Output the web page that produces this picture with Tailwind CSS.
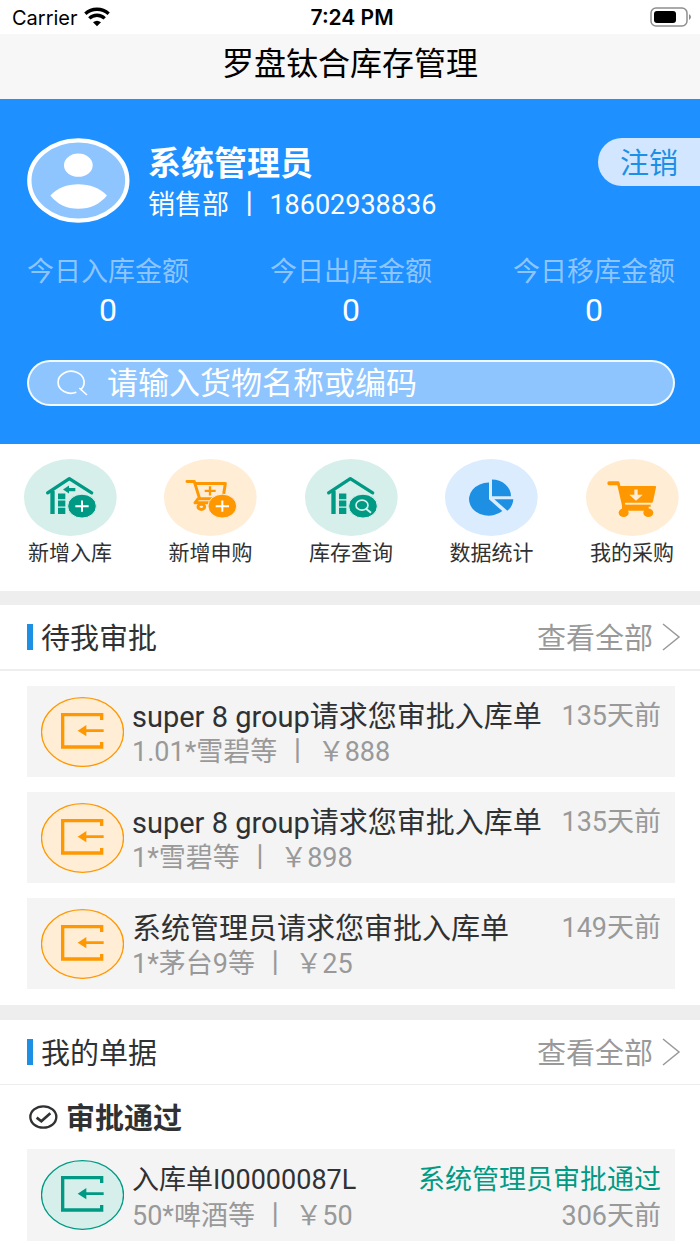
<!DOCTYPE html>
<html lang="zh-CN">
<head>
<meta charset="utf-8">
<meta name="viewport" content="width=device-width, initial-scale=1">
<title>罗盘钛合库存管理</title>
<script src="https://cdn.jsdelivr.net/npm/@tailwindcss/browser@4"></script>
</head>
<body class="bg-white font-[Roboto,'Noto_Sans_CJK_SC',sans-serif] text-[#303133]">
<svg class="hidden" aria-hidden="true">
  <symbol id="house" viewBox="0 0 279 232" preserveAspectRatio="none">
    <path d="M71 102L136 59L203 102" fill="none" stroke="currentColor" stroke-width="10" stroke-linecap="round" stroke-linejoin="round"/>
    <path d="M79 96h13v70h-13zM102 104h22v17h-22zM102 125h22v18h-22zM102 147h22v19h-22z" fill="currentColor"/>
  </symbol>
  <symbol id="enter" viewBox="0 0 249 210" preserveAspectRatio="none">
    <ellipse cx="124.500" cy="105" rx="123" ry="103" fill="var(--fill)" stroke="currentColor" stroke-width="4"/>
    <path d="M182 69V53H65V150H182V135" fill="none" stroke="currentColor" stroke-width="10"/>
    <path d="M110 101L136 84V97H188V105H136V118Z" fill="currentColor"/>
  </symbol>
  <symbol id="more" viewBox="0 0 20 28"><path d="M2 1L18 14L2 27" fill="none" stroke="currentColor" stroke-width="1.500"/></symbol>
</svg>

<div class="flex h-[34px] items-center justify-between bg-white pt-0.5 pr-2 pl-3 font-[Inter,sans-serif] text-xl text-black">
  <div class="flex flex-1 items-center gap-1.5">
    <span>Carrier</span>
    <svg class="mb-0.5 h-5 w-[26px]" viewBox="0 0 78 60" aria-label="Wi-Fi" role="img">
      <path d="M4 20A50 46 0 0 1 74 20M16 34A32 30 0 0 1 62 34" fill="none" stroke="#000" stroke-width="10"/>
      <path d="M27 46Q39 37 51 46L39 58Z"/>
    </svg>
  </div>
  <div class="text-[21px] font-semibold">7:24 PM</div>
  <div class="flex flex-1 justify-end">
    <svg class="mb-0.5 h-5 w-[42px]" viewBox="0 0 42 20" aria-label="电量" role="img">
      <rect x="1" y="1" width="36" height="18" rx="5" fill="none" stroke="#8e8e8e" stroke-width="1.500"/>
      <rect x="4" y="4" width="22" height="12" rx="3"/>
      <path d="M39 7Q43 10 39 13Z" fill="#8e8e8e"/>
    </svg>
  </div>
</div>
<header class="flex h-[65px] items-center justify-center bg-[#f7f7f7] pb-1.5">
  <h1 class="text-[32px] leading-10 text-black">罗盘钛合库存管理</h1>
</header>

<section class="flex h-[345px] flex-col bg-[#1e90ff] pt-[39px] text-white">
  <div class="flex h-[85px] items-start pl-[27px]">
    <svg class="h-[85px] w-[103px]" viewBox="0 0 309 256" preserveAspectRatio="none" role="img" aria-label="头像">
      <ellipse cx="154" cy="128" rx="147" ry="121" fill="#8ec5ff" stroke="#fff" stroke-width="13"/>
      <ellipse cx="154" cy="82" rx="43" ry="35" fill="#fff"/>
      <path d="M70 173C92 150 120 139 154 139S217 150 240 173C217 200 190 213 154 213S92 200 70 173Z" fill="#fff"/>
    </svg>
    <div class="flex flex-1 flex-col pt-1.5 pl-[18px]">
      <div class="text-[33px] leading-10 font-bold">系统管理员</div>
      <div class="text-[27px] leading-[42px]">销售部 丨 18602938836</div>
    </div>
    <button type="button" class="h-12 w-[102px] rounded-l-full bg-[#d2e7ff] pt-1 text-[29px] leading-10 text-[#1e8fe6]">注销</button>
  </div>
  <dl class="mt-[30px] flex justify-between pr-[25px] pl-[27px] text-center leading-[38px]">
    <div><dt class="text-[27px] text-[#8ec5ff]">今日入库金额</dt><dd class="text-[32px]">0</dd></div>
    <div><dt class="text-[27px] text-[#8ec5ff]">今日出库金额</dt><dd class="text-[32px]">0</dd></div>
    <div><dt class="text-[27px] text-[#8ec5ff]">今日移库金额</dt><dd class="text-[32px]">0</dd></div>
  </dl>
  <label class="mt-[31px] mr-[25px] ml-[27px] flex h-[46px] items-center gap-[18px] rounded-full border-2 border-white/90 bg-[#8ec5ff] pl-7">
    <svg class="h-7 w-8" viewBox="0 0 96 84" preserveAspectRatio="none" fill="none" stroke="#fff" stroke-width="5" aria-hidden="true">
      <path d="M58 70A39 33 0 1 1 70 63M67 57L90 78"/>
    </svg>
    <input type="text" aria-label="搜索货物" placeholder="请输入货物名称或编码" class="min-w-0 flex-1 bg-transparent pt-0.5 text-[31px] leading-10 outline-none placeholder:text-white">
  </label>
</section>

<nav class="flex h-[147px] justify-between pt-[15px] pr-5 pl-[22px] text-[21px] leading-[34px]">
  <a href="#" class="flex w-24 flex-col items-center">
    <svg class="h-[77px] w-[93px] text-[#009a84]" viewBox="0 0 279 232" preserveAspectRatio="none" aria-hidden="true">
      <ellipse cx="139" cy="116" rx="139" ry="116" fill="#d7efeb"/>
      <use href="#house" width="279" height="232"/>
      <path d="M117 92L135 80V87H154V97H135V104Z" fill="currentColor"/>
      <ellipse cx="174" cy="142" rx="43" ry="36" fill="currentColor" stroke="#d7efeb" stroke-width="3"/>
      <path d="M154 142H194M174 125V159" stroke="#fff" stroke-width="6"/>
    </svg>
    <span>新增入库</span>
  </a>
  <a href="#" class="flex w-24 flex-col items-center">
    <svg class="h-[77px] w-[93px] text-[#ff9800]" viewBox="0 0 279 232" preserveAspectRatio="none" aria-hidden="true">
      <ellipse cx="139" cy="116" rx="139" ry="116" fill="#ffedd6"/>
      <path d="M69 68H91L107 120H145M94 74H184L178 112M102 120L93 132H145" fill="none" stroke="currentColor" stroke-width="9" stroke-linejoin="round" stroke-linecap="round"/>
      <ellipse cx="112" cy="144" rx="10" ry="8" fill="none" stroke="currentColor" stroke-width="9"/>
      <path d="M122 96H155M138 82V110" stroke="currentColor" stroke-width="7"/>
      <ellipse cx="175" cy="142" rx="43" ry="36" fill="currentColor" stroke="#ffedd6" stroke-width="3"/>
      <path d="M155 142H195M175 125V159" stroke="#fff" stroke-width="6"/>
    </svg>
    <span>新增申购</span>
  </a>
  <a href="#" class="flex w-24 flex-col items-center">
    <svg class="h-[77px] w-[93px] text-[#009a84]" viewBox="0 0 279 232" preserveAspectRatio="none" aria-hidden="true">
      <ellipse cx="139" cy="116" rx="139" ry="116" fill="#d7efeb"/>
      <use href="#house" width="279" height="232"/>
      <ellipse cx="174" cy="142" rx="43" ry="36" fill="currentColor" stroke="#d7efeb" stroke-width="3"/>
      <ellipse cx="171" cy="139" rx="18" ry="15" fill="none" stroke="#d7efeb" stroke-width="5"/>
      <path d="M183 150L198 162" stroke="#d7efeb" stroke-width="6"/>
    </svg>
    <span>库存查询</span>
  </a>
  <a href="#" class="flex w-24 flex-col items-center">
    <svg class="h-[77px] w-[93px] text-[#1e90e3]" viewBox="0 0 279 232" preserveAspectRatio="none" aria-hidden="true">
      <ellipse cx="139" cy="116" rx="139" ry="116" fill="#dbecff"/>
      <path d="M132 71A59 50 0 1 0 172 157L132 121ZM141 62A57 50 0 0 1 198 112H141ZM148 121H205Q204 142 187 156Z" fill="currentColor"/>
    </svg>
    <span>数据统计</span>
  </a>
  <a href="#" class="flex w-24 flex-col items-center">
    <svg class="h-[77px] w-[93px] text-[#ff9800]" viewBox="0 0 279 232" preserveAspectRatio="none" aria-hidden="true">
      <ellipse cx="139" cy="116" rx="139" ry="116" fill="#ffedd6"/>
      <path d="M69 67H97Q101 67 103 81H207Q211 81 210 86L201 128Q200 132 196 132H118V137H194V144H188V156H108V140L94 79H69Q64 79 64 73T69 67Z" fill="currentColor"/>
      <path d="M118 134.500H194" stroke="#ffedd6" stroke-width="4"/>
      <ellipse cx="113" cy="162" rx="15" ry="13" fill="currentColor"/>
      <ellipse cx="187" cy="162" rx="15" ry="13" fill="currentColor"/>
      <path d="M145 92H155V108H170L150 126L130 108H145Z" fill="#ffedd6"/>
    </svg>
    <span>我的采购</span>
  </a>
</nav>

<section class="border-t-[14px] border-[#eee]">
  <div class="flex h-[66px] items-center border-b-2 border-[#eee] pr-[19px] pl-[27px] text-[29px] leading-10">
    <div class="mr-2 h-[26px] w-1.5 bg-[#1e90e3]"></div>
    <h2 class="flex-1 pt-1">待我审批</h2>
    <a href="#" class="flex items-center gap-2 text-[#999]"><span class="pt-1">查看全部</span><svg class="h-7 w-5" aria-hidden="true"><use href="#more"/></svg></a>
  </div>
  <ul class="flex flex-col gap-[15px] pt-[15px] pr-[25px] pb-4 pl-[27px]">
    <li class="flex h-[91px] bg-[#f4f4f4] px-3.5 pt-[11px]">
      <svg class="h-[70px] w-[83px] text-[#ff9800] [--fill:#ffedd6]" aria-hidden="true"><use href="#enter"/></svg>
      <div class="flex-1 pl-2"><div class="text-[29px] leading-10">super 8 group请求您审批入库单</div><div class="text-[27px] leading-[30px] text-[#999]">1.01*雪碧等 丨 ￥888</div></div>
      <time class="text-[27px] leading-[38px] text-[#999]">135天前</time>
    </li>
    <li class="flex h-[91px] bg-[#f4f4f4] px-3.5 pt-[11px]">
      <svg class="h-[70px] w-[83px] text-[#ff9800] [--fill:#ffedd6]" aria-hidden="true"><use href="#enter"/></svg>
      <div class="flex-1 pl-2"><div class="text-[29px] leading-10">super 8 group请求您审批入库单</div><div class="text-[27px] leading-[30px] text-[#999]">1*雪碧等 丨 ￥898</div></div>
      <time class="text-[27px] leading-[38px] text-[#999]">135天前</time>
    </li>
    <li class="flex h-[91px] bg-[#f4f4f4] px-3.5 pt-[11px]">
      <svg class="h-[70px] w-[83px] text-[#ff9800] [--fill:#ffedd6]" aria-hidden="true"><use href="#enter"/></svg>
      <div class="flex-1 pl-2"><div class="text-[29px] leading-10">系统管理员请求您审批入库单</div><div class="text-[27px] leading-[30px] text-[#999]">1*茅台9等 丨 ￥25</div></div>
      <time class="text-[27px] leading-[38px] text-[#999]">149天前</time>
    </li>
  </ul>
</section>

<section class="border-t-[15px] border-[#eee]">
  <div class="flex h-[65px] items-center border-b border-[#eee] pr-[19px] pl-[27px] text-[29px] leading-10">
    <div class="mr-2 h-[26px] w-1.5 bg-[#1e90e3]"></div>
    <h2 class="flex-1 pt-1">我的单据</h2>
    <a href="#" class="flex items-center gap-2 text-[#999]"><span class="pt-1">查看全部</span><svg class="h-7 w-5" aria-hidden="true"><use href="#more"/></svg></a>
  </div>
  <h3 class="flex h-16 items-center gap-2 pl-[29px] text-[29px] leading-10 font-bold">
    <svg class="h-6 w-[29px]" viewBox="0 0 87 72" preserveAspectRatio="none" fill="none" stroke="currentColor" aria-hidden="true">
      <ellipse cx="43" cy="36" rx="39" ry="32" stroke-width="7"/><path d="M23 38L37 49L64 25" stroke-width="8"/>
    </svg><span class="pt-1">审批通过</span>
  </h3>
  <ul class="pr-[25px] pb-[3px] pl-[27px]">
    <li class="flex h-[92px] bg-[#f4f4f4] px-3.5 pt-[11px]">
      <svg class="h-[70px] w-[83px] text-[#009a84] [--fill:#d7efeb]" aria-hidden="true"><use href="#enter"/></svg>
      <div class="flex-1 pl-2 text-[27px] leading-9"><div class="pt-0.5">入库单I00000087L</div><div class="text-[#999]">50*啤酒等 丨 ￥50</div></div>
      <div class="text-right text-[27px] leading-9"><div class="pt-0.5 text-[#009a84]">系统管理员审批通过</div><time class="text-[#999]">306天前</time></div>
    </li>
  </ul>
</section>
</body>
</html>
